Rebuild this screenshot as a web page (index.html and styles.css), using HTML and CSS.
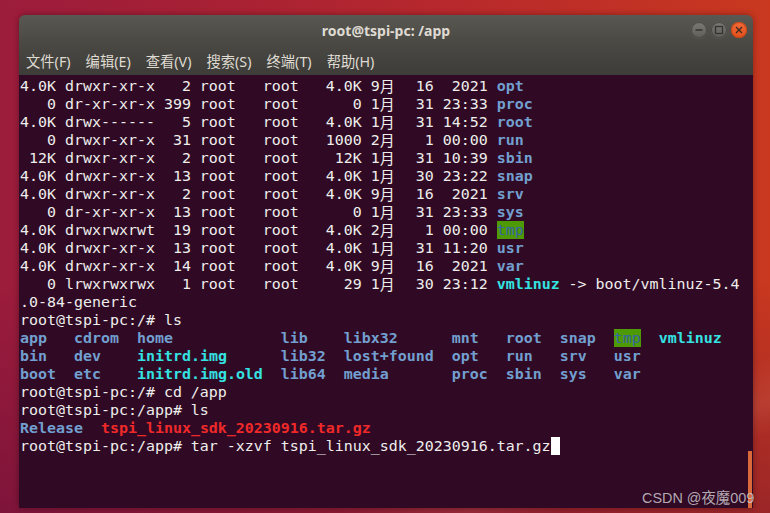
FILE: index.html
```html
<!DOCTYPE html>
<html lang="zh">
<head>
<meta charset="utf-8">
<title>root@tspi-pc: /app</title>
<link rel="stylesheet" href="styles.css">
</head>
<body>
<div class="desktop">
  <div class="window">
    <div class="header">
      <div class="titlebar">
        <span></span>
        <span class="title">root@tspi-pc: /app</span>
        <div class="controls">
          <span class="btn"><svg width="16" height="16" viewBox="0 0 16 16"><line x1="4.5" y1="8" x2="11.5" y2="8" stroke="#34332f" stroke-width="1.3"/></svg></span>
          <span class="btn"><svg width="16" height="16" viewBox="0 0 16 16"><rect x="4.5" y="4.5" width="7" height="7" fill="none" stroke="#34332f" stroke-width="1.3"/></svg></span>
          <span class="btn close"><svg width="16" height="16" viewBox="0 0 16 16"><path d="M5 5 L11 11 M11 5 L5 11" stroke="#3a2a22" stroke-width="1.3"/></svg></span>
        </div>
      </div>
      <nav class="menubar">
        <span>文件(F)</span>
        <span>编辑(E)</span>
        <span>查看(V)</span>
        <span>搜索(S)</span>
        <span>终端(T)</span>
        <span>帮助(H)</span>
      </nav>
    </div>
    <div class="terminal">
<pre class="screen">4.0K drwxr-xr-x   2 root   root   4.0K 9<span class="w">月</span>  16  2021 <b class="dir">opt</b>
   0 dr-xr-xr-x 399 root   root      0 1<span class="w">月</span>  31 23:33 <b class="dir">proc</b>
4.0K drwx------   5 root   root   4.0K 1<span class="w">月</span>  31 14:52 <b class="dir">root</b>
   0 drwxr-xr-x  31 root   root   1000 2<span class="w">月</span>   1 00:00 <b class="dir">run</b>
 12K drwxr-xr-x   2 root   root    12K 1<span class="w">月</span>  31 10:39 <b class="dir">sbin</b>
4.0K drwxr-xr-x  13 root   root   4.0K 1<span class="w">月</span>  30 23:22 <b class="dir">snap</b>
4.0K drwxr-xr-x   2 root   root   4.0K 9<span class="w">月</span>  16  2021 <b class="dir">srv</b>
   0 dr-xr-xr-x  13 root   root      0 1<span class="w">月</span>  31 23:33 <b class="dir">sys</b>
4.0K drwxrwxrwt  19 root   root   4.0K 2<span class="w">月</span>   1 00:00 <span class="sticky">tmp</span>
4.0K drwxr-xr-x  13 root   root   4.0K 1<span class="w">月</span>  31 11:20 <b class="dir">usr</b>
4.0K drwxr-xr-x  14 root   root   4.0K 9<span class="w">月</span>  16  2021 <b class="dir">var</b>
   0 lrwxrwxrwx   1 root   root     29 1<span class="w">月</span>  30 23:12 <b class="link">vmlinuz</b> -&gt; boot/vmlinuz-5.4
.0-84-generic
root@tspi-pc:/# ls
<b class="dir">app</b>   <b class="dir">cdrom</b>  <b class="dir">home</b>            <b class="dir">lib</b>    <b class="dir">libx32</b>      <b class="dir">mnt</b>   <b class="dir">root</b>  <b class="dir">snap</b>  <span class="sticky">tmp</span>  <b class="link">vmlinuz</b>
<b class="dir">bin</b>   <b class="dir">dev</b>    <b class="link">initrd.img</b>      <b class="dir">lib32</b>  <b class="dir">lost+found</b>  <b class="dir">opt</b>   <b class="dir">run</b>   <b class="dir">srv</b>   <b class="dir">usr</b>
<b class="dir">boot</b>  <b class="dir">etc</b>    <b class="link">initrd.img.old</b>  <b class="dir">lib64</b>  <b class="dir">media</b>       <b class="dir">proc</b>  <b class="dir">sbin</b>  <b class="dir">sys</b>   <b class="dir">var</b>
root@tspi-pc:/# cd /app
root@tspi-pc:/app# ls
<b class="dir">Release</b>  <b class="arch">tspi_linux_sdk_20230916.tar.gz</b>
root@tspi-pc:/app# tar -xzvf tspi_linux_sdk_20230916.tar.gz<span class="cursor"> </span></pre>
      <div class="scroll-thumb"></div>
    </div>
  </div>
  <div class="watermark">CSDN @夜魔009</div>
</div>
</body>
</html>
```
FILE: styles.css
```css
html, body {
  margin: 0;
  padding: 0;
}
body {
  width: 770px;
  height: 513px;
  overflow: hidden;
  background:
    linear-gradient(to bottom, rgba(60, 0, 50, 0) 55%, rgba(70, 5, 55, 0.35) 100%),
    linear-gradient(160deg, rgba(255, 255, 255, 0) 80%, rgba(255, 160, 120, 0.18) 86%, rgba(255, 255, 255, 0) 90%),
    linear-gradient(90deg, #9c1c3c 0%, #a82134 30%, #b8292c 60%, #c9381f 100%);
}
.desktop {
  position: relative;
  width: 770px;
  height: 513px;
  padding: 15px 0 0 19px;
  box-sizing: border-box;
}
.window {
  width: 734px;
  height: 493px;
  display: flex;
  flex-direction: column;
  border-radius: 6px 6px 0 0;
  overflow: hidden;
  box-shadow: 0 0 6px rgba(0, 0, 0, 0.35);
}
.header {
  height: 60px;
  background: linear-gradient(to bottom, #5a5853 0%, #4a4944 45%, #3d3c38 100%);
  display: flex;
  flex-direction: column;
}
.titlebar {
  height: 30px;
  display: grid;
  grid-template-columns: 1fr auto 1fr;
  align-items: center;
}
.title {
  font-family: "Noto Sans", "Liberation Sans", sans-serif;
  font-weight: bold;
  font-size: 14px;
  color: #dfdbd2;
  padding-top: 1px;
}
.controls {
  justify-self: end;
  display: flex;
  gap: 4px;
  margin-right: 6px;
  padding-top: 1px;
}
.btn {
  width: 16px;
  height: 16px;
  border-radius: 50%;
  background: linear-gradient(to bottom, #7a7974, #5f5e59);
  box-shadow: inset 0 0 0 1px #4a4944, 0 1px 0 rgba(255, 255, 255, 0.06);
  display: flex;
}
.btn.close {
  background: linear-gradient(to bottom, #f26b3a, #e2501a);
  box-shadow: inset 0 0 0 1px #c2461a;
}
.menubar {
  height: 30px;
  display: flex;
  align-items: center;
  gap: 15px;
  padding-left: 7px;
  padding-top: 1px;
  font-family: "Noto Sans", "Noto Sans CJK SC", sans-serif;
  font-size: 14.3px;
  color: #dfdbd2;
}
.terminal {
  position: relative;
  flex: 1;
  background: #300a24;
  padding: 2px 0 0 1px;
}
.screen {
  margin: 0;
  font-family: "DejaVu Sans Mono", "Noto Sans CJK SC", monospace;
  font-size: 14.95px;
  line-height: 18px;
  color: #eeeeec;
  white-space: pre;
}
.screen b {
  font-weight: bold;
}
.w {
  display: inline-block;
  width: 18px;
  height: 18px;
  line-height: 18px;
  vertical-align: top;
  font-family: "Noto Sans CJK SC", sans-serif;
}
.dir {
  color: #729fcf;
}
.link {
  color: #34e2e2;
}
.arch {
  color: #ef2929;
}
.sticky {
  color: #3465a4;
  background: #4e9a06;
}
.cursor {
  background: #ffffff;
}
.scroll-thumb {
  position: absolute;
  right: 1px;
  top: 376px;
  width: 4px;
  bottom: 0;
  background: #d9683a;
}
.watermark {
  position: absolute;
  left: 642px;
  top: 486px;
  font-family: "Liberation Sans", "Noto Sans CJK SC", sans-serif;
  font-size: 14.4px;
  color: rgba(205, 200, 205, 0.85);
}
```
